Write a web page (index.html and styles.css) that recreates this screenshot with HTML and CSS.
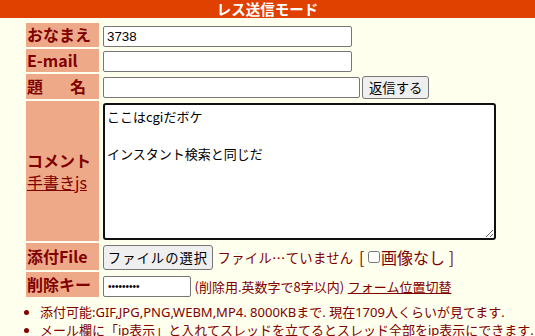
FILE: index.html
```html
<!DOCTYPE html>
<html lang="ja">
<head>
    <meta charset="UTF-8">
    <title>レス送信モード</title>
    <link rel="stylesheet" href="styles.css">
</head>
<body>
    <div class="mode-bar">レス送信モード</div>
    <form class="post-form">
        <table class="ftbl">
            <tr>
                <td class="ftdc">おなまえ</td>
                <td><input type="text" class="txt" value="3738"></td>
            </tr>
            <tr>
                <td class="ftdc">E-mail</td>
                <td><input type="text" class="txt"></td>
            </tr>
            <tr>
                <td class="ftdc ftdc-wide">題<span class="sp"></span>名</td>
                <td><input type="text" class="txt txt-sub"><button type="button" class="btn">返信する</button></td>
            </tr>
            <tr>
                <td class="ftdc ftdc-com">コメント<br><a href="#" class="lnk lnk-label">手書きjs</a></td>
                <td><textarea class="com">ここはcgiだボケ

インスタント検索と同じだ</textarea></td>
            </tr>
            <tr>
                <td class="ftdc ftdc-file">添付File</td>
                <td class="file-cell">
                    <button type="button" class="btn btn-file">ファイルの選択</button>
                    <span class="file-name">ファイル…ていません</span>
                    <label class="noimg">[ <input type="checkbox" class="chk">画像なし ]</label>
                </td>
            </tr>
            <tr>
                <td class="ftdc">削除キー</td>
                <td class="pwd-cell">
                    <input type="password" class="pwd" value="12345678x">
                    <span class="note">(削除用.英数字で8字以内)</span>
                    <a href="#" class="lnk">フォーム位置切替</a>
                </td>
            </tr>
        </table>
        <ul class="rules">
            <li>添付可能:GIF,JPG,PNG,WEBM,MP4. 8000KBまで. 現在1709人くらいが見てます.</li>
            <li>メール欄に「ip表示」と入れてスレッドを立てるとスレッド全部をip表示にできます.</li>
        </ul>
    </form>
</body>
</html>
```

FILE: styles.css
```css
/* Page */
body {
    margin: 0;
    background: #ffffee;
    color: #800000;
    font-family: "Noto Sans", "Noto Sans CJK JP", sans-serif;
}

.mode-bar {
    background: #e04000;
    color: #fff;
    font-weight: bold;
    font-size: 14.5px;
    line-height: 18px;
    height: 18px;
    text-align: center;
    font-family: "Noto Sans CJK JP", sans-serif;
}

.post-form {
    margin: 0;
}

/* Form table */
.ftbl {
    margin-left: 25px;
    margin-top: 3px;
    border-spacing: 1px 2px;
}

.ftbl td {
    padding: 0 1px;
}

.ftdc {
    width: 71px;
    background: #eeaa88;
    color: #800000;
    font-weight: bold;
    font-size: 16px;
    line-height: 21px;
    font-family: "Noto Sans CJK JP", sans-serif;
    white-space: nowrap;
    padding: 1px 1px !important;
}

.ftdc-com {
    line-height: 22px;
}

.ftdc-file {
    padding: 3px 1px 2px !important;
}

.ftdc-wide .sp {
    display: inline-block;
    width: 27px;
}

.txt {
    box-sizing: border-box;
    width: 249px;
    height: 21px;
    margin: 1px 0 0 2px;
    padding: 1px 3px;
    border: 1px solid #767676;
    border-radius: 2px;
    background: #fff;
    font-family: "Liberation Sans", "Noto Sans CJK JP", sans-serif;
    font-size: 13.33px;
    color: #000;
    vertical-align: middle;
}

.txt-sub {
    width: 257px;
}

.btn {
    height: 23px;
    margin: 0 0 0 2px;
    padding: 0 6px;
    border: 1px solid #767676;
    border-radius: 3px;
    background: #efefef;
    color: #000;
    font-family: "Noto Sans CJK JP", sans-serif;
    font-size: 13.33px;
    vertical-align: middle;
}

.com {
    box-sizing: border-box;
    display: block;
    width: 393px;
    height: 137px;
    margin: 2px 0 1px 2px;
    padding: 3px 2px;
    border: 2px solid #101010;
    border-radius: 3px;
    background: #fff;
    color: #000;
    font-family: "Noto Sans CJK JP", sans-serif;
    font-size: 13px;
    line-height: 18.5px;
}

.file-cell, .pwd-cell {
    white-space: nowrap;
    font-family: "Noto Sans CJK JP", sans-serif;
}

.btn-file {
    width: 110px;
    height: 25px;
    padding: 0;
    letter-spacing: 1px;
}

.file-name {
    font-size: 13.33px;
    letter-spacing: 0.3px;
    margin-left: 1px;
    vertical-align: middle;
}

.noimg {
    font-size: 16px;
    margin-left: 2px;
    vertical-align: middle;
}

.chk {
    width: 12px;
    height: 12px;
    margin: 0 1px 0 0;
    vertical-align: 1px;
}

.pwd {
    box-sizing: border-box;
    width: 88px;
    height: 21px;
    margin: 1px 0 0 2px;
    padding: 1px 4px;
    border: 1px solid #767676;
    border-radius: 2px;
    background: #fff;
    font-size: 10px;
    letter-spacing: 0;
    vertical-align: middle;
}

.note {
    font-size: 13px;
    vertical-align: middle;
}

.lnk {
    color: #800000;
    text-decoration: underline;
    font-size: 13px;
    vertical-align: middle;
}

.lnk-label {
    font-weight: normal;
    font-size: 16px;
    vertical-align: baseline;
}

/* Notes */
.rules {
    margin: 4px 0 0 0;
    padding-left: 40px;
    font-size: 13px;
    line-height: 18px;
    white-space: nowrap;
    overflow: hidden;
}

.rules li {
    margin: 0;
}
```
